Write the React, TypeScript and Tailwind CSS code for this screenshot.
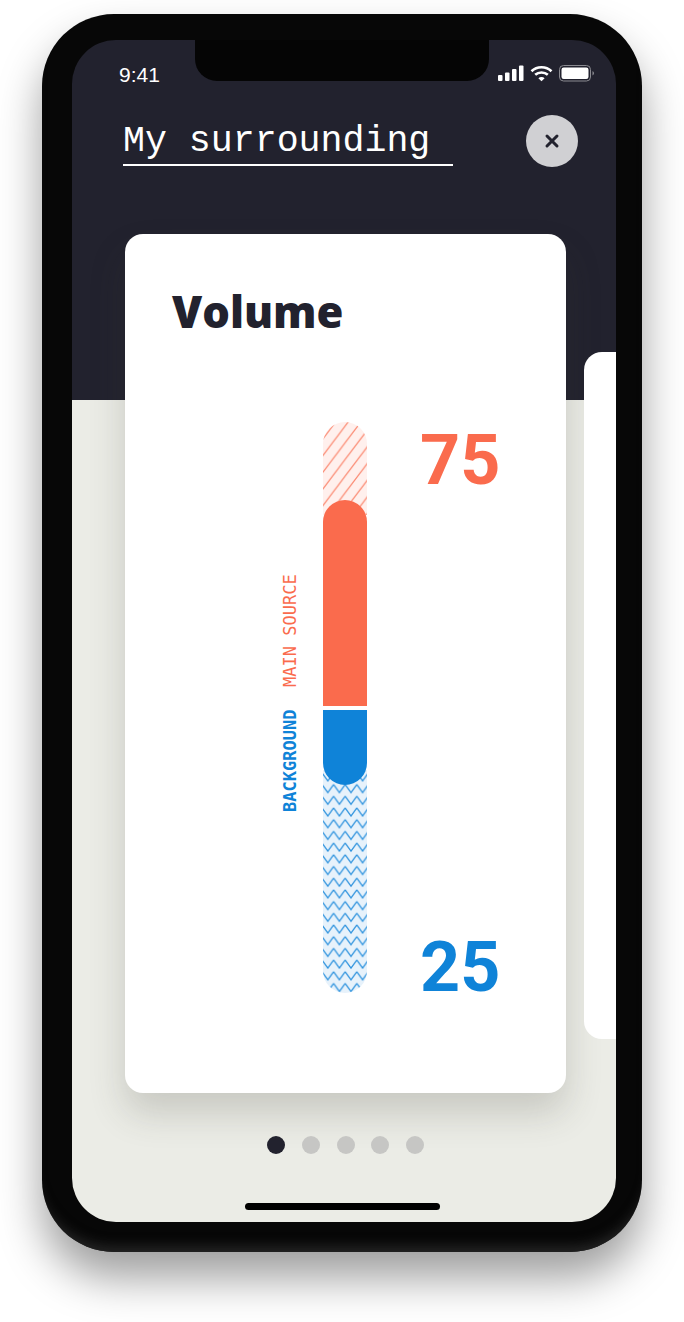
import { X } from 'lucide-react';

const pageDots = [0, 1, 2, 3, 4];

function StatusIcons() {
  return (
    <div className="flex items-start gap-[6px]">
      <svg width="26" height="16" viewBox="0 0 26 16" fill="white">
        <rect x="0" y="10" width="4.5" height="6" rx="1" />
        <rect x="7" y="7.5" width="4.5" height="8.5" rx="1" />
        <rect x="14" y="4" width="4.5" height="12" rx="1" />
        <rect x="21" y="0.5" width="4.5" height="15.5" rx="1" />
      </svg>
      <svg width="23" height="17" viewBox="0 0 23 17" fill="none" stroke="white" strokeWidth="2.6">
        <path d="M1.5 6.2C7 1 16 1 21.5 6.2" />
        <path d="M5.2 9.8C8.6 6.7 14.4 6.7 17.8 9.8" />
        <path d="M11.5 16.2L8.4 13.2C10 11.7 13 11.7 14.6 13.2Z" fill="white" stroke="none" />
      </svg>
      <svg width="36" height="17" viewBox="0 0 36 17" fill="none">
        <rect x="0.5" y="0.5" width="31" height="15.5" rx="4" stroke="#8a8a90" />
        <rect x="2.5" y="2.5" width="27" height="11.5" rx="2.2" fill="white" />
        <path d="M33.5 6V10.5C34.4 10 35 9.2 35 8.2S34.4 6.5 33.5 6Z" fill="#8a8a90" />
      </svg>
    </div>
  );
}

function Slider() {
  return (
    <div className="flex w-[44px] flex-col">
      <div className="h-[93px] overflow-hidden rounded-t-[22px] bg-[#fff0ed]">
        <svg width="44" height="93">
          <defs>
            <pattern id="hatch" width="12.6" height="16.7" patternUnits="userSpaceOnUse">
              <path d="M-3.15 4.175L3.15 -4.175M0 16.7L12.6 0M9.45 20.875L15.75 12.525" stroke="#fb8a72" strokeWidth="1.3" fill="none" />
            </pattern>
          </defs>
          <rect width="44" height="93" fill="url(#hatch)" />
        </svg>
      </div>
      <div className="relative z-10 -mt-[15px] h-[206px] rounded-t-[22px] bg-[#fa6b4d]" />
      <div className="h-[4px] bg-white" />
      <div className="relative z-10 h-[75px] rounded-b-[22px] bg-[#0f83d8]" />
      <div className="-mt-[15px] h-[223px] overflow-hidden rounded-b-[22px] bg-[#e7f2fb]">
        <svg width="44" height="223">
          <defs>
            <pattern id="zigzag" x="-1" y="2" width="11.6" height="11.7" patternUnits="userSpaceOnUse">
              <path d="M0 0.8L5.8 8.8L11.6 0.8" stroke="#2f93de" strokeWidth="1.3" fill="none" />
            </pattern>
          </defs>
          <rect width="44" height="223" fill="url(#zigzag)" />
        </svg>
      </div>
    </div>
  );
}

export default function App() {
  return (
    <div className="h-[1322px] w-[684px] overflow-hidden bg-white pl-[42px] pt-[14px]">
      {/* Phone body */}
      <div className="h-[1238px] w-[600px] rounded-[72px] bg-[#070707] px-[30px] pb-[30px] pt-[26px] shadow-[0_26px_44px_rgba(0,0,0,0.38),inset_0_-14px_12px_-8px_#242424]">
        <div className="relative h-[1182px] w-[544px] overflow-hidden rounded-[44px] bg-[linear-gradient(#22222e_360px,#ebece6_360px)]">
          {/* Notch */}
          <div className="absolute left-[123px] top-0 h-[41px] w-[294px] rounded-b-[22px] bg-[#050505]" />

          {/* Status bar */}
          <div className="flex h-[52px] items-start justify-between pl-[47px] pr-[21px] pt-[25px]">
            <span className="text-[21px] leading-[20px] text-white [font-family:'Liberation_Sans',sans-serif]">9:41</span>
            <StatusIcons />
          </div>

          {/* Title row */}
          <div className="mt-[23px] flex items-start justify-between pl-[51px] pr-[38px]">
            <div className="h-[51px] w-[330px] border-b-2 border-white pt-[7px] text-[36.6px] font-normal leading-[40px] whitespace-nowrap text-white [font-family:'Liberation_Mono',monospace]">
              My surrounding
            </div>
            <button className="flex h-[52px] w-[52px] items-center justify-center rounded-full bg-[#d0d0d3] text-[#22222e]">
              <X size={20} strokeWidth={3.6} />
            </button>
          </div>

          {/* Cards */}
          <div className="mt-[67px] flex items-start">
            <div className="ml-[53px] h-[859px] w-[441px] shrink-0 rounded-[18px] bg-white shadow-[0_20px_36px_rgba(60,62,50,0.2)]">
              <h1 className="ml-[47px] mt-[48px] h-[60px] text-[43.5px] font-extrabold leading-[60px] text-[#22222e] [font-family:'Open_Sans',sans-serif]">
                Volume
              </h1>
              <div className="ml-[157px] mt-[80px] flex h-[571px] items-stretch">
                <div className="w-[41px] pt-[152px] [font-family:'DejaVu_Sans_Mono',monospace]">
                  <div className="flex rotate-180 flex-row items-start gap-[23px] text-[17px] leading-[17px] [writing-mode:vertical-rl]">
                    <span className="whitespace-nowrap font-semibold text-[#0f83d8]">BACKGROUND</span>
                    <span className="whitespace-nowrap text-[#fa6b4d]">MAIN SOURCE</span>
                  </div>
                </div>
                <Slider />
                <div className="ml-[53px] flex flex-col gap-[431px] text-[70px] font-bold leading-[76px] [font-family:'Roboto',sans-serif]">
                  <span className="text-[#fa6b4d]">75</span>
                  <span className="text-[#0f83d8]">25</span>
                </div>
              </div>
            </div>
            <div className="ml-[18px] mt-[118px] h-[687px] grow rounded-l-[18px] bg-white" />
          </div>

          {/* Page dots */}
          <div className="mt-[43px] flex justify-center gap-[16.75px] pl-[3px]">
            {pageDots.map((dot) => (
              <div
                key={dot}
                className={dot === 0 ? 'h-[18px] w-[18px] rounded-full bg-[#22222e]' : 'h-[18px] w-[18px] rounded-full bg-[#c6c6c4]'}
              />
            ))}
          </div>

          {/* Home indicator */}
          <div className="ml-[173px] mt-[49px] h-[7px] w-[195px] rounded-full bg-black" />
        </div>
      </div>
    </div>
  );
}
